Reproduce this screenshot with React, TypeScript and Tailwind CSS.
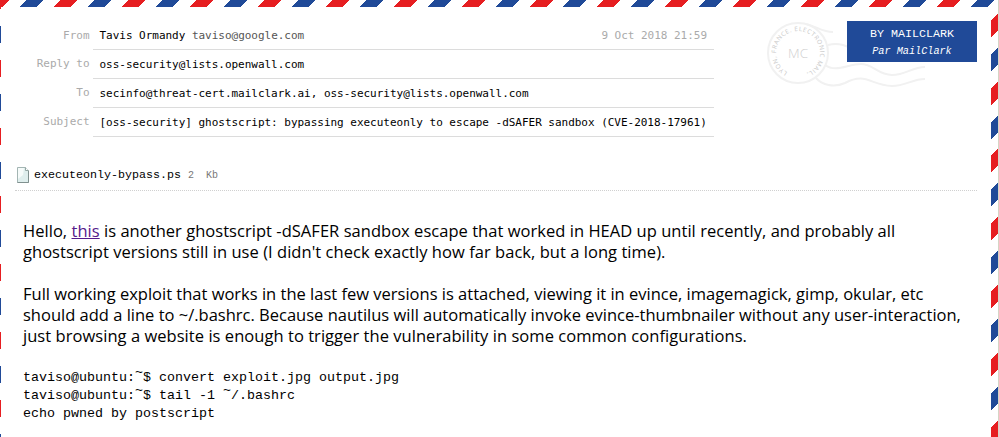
const stripes =
  "bg-[repeating-linear-gradient(135deg,#e61e21_0px,#e61e21_7.05px,#fff_7.05px,#fff_19.05px,#204a98_19.05px,#204a98_31.05px,#fff_31.05px,#fff_43.05px,#e61e21_43.05px,#e61e21_48px)]";

function Field({ label, children, first }: { label: string; children: React.ReactNode; first?: boolean }) {
  return (
    <div className="flex h-[29px]">
      <div className={`w-[92px] pr-[3.5px] text-right leading-[29px] text-[#aaa] ${first ? "" : "-mt-px"}`}>{label}</div>
      <div className="flex w-[621px] justify-between border-b border-[#dcdcdc] pr-[7px] pl-[6.5px] leading-[29px] whitespace-pre text-black">
        {children}
      </div>
    </div>
  );
}

function Stamp() {
  return (
    <svg width="170" height="75" viewBox="764 16 170 75" className="block" fill="none">
      <g stroke="#f1f1f1" strokeWidth="2">
        <path d="M806 24 C818 27 822 32 833 32" />
        <path d="M828 45 C836 43 843 44 850 48" />
        <path d="M825 65 C836 73 848 64 861 64 C873 64 878 75 892 75 C906 75 912 67 925 67" />
        <path d="M816 78 C822 85 834 88 845 83 C866 72 870 85 892 86 C906 86 912 79 925 79" />
        <circle cx="798" cy="53" r="30" />
      </g>
      <defs>
        <path id="ring" d="M798 75 A22 22 0 1 1 798.1 75" />
      </defs>
      <text fontFamily="Open Sans, sans-serif" fontSize="6.2" fill="#c8c8c8">
        <textPath href="#ring" startOffset="11" textLength="118">LYON, FRANCE. ELECTRONIC MAIL,</textPath>
      </text>
      <text x="798" y="58" textAnchor="middle" fontFamily="Open Sans, sans-serif" fontSize="13.5" fontWeight="300" fill="#d0d0d0">MC</text>
    </svg>
  );
}

function FileIcon() {
  return (
    <svg width="14" height="18" viewBox="0 0 14 18" className="-mt-[2px]">
      <path d="M1.5 1.5h8l3 3v12h-11z" fill="#dfeeed" stroke="#a3b5b3" />
      <path d="M12.5 5v11.5h-11" fill="none" stroke="#80918f" />
      <path d="M9.5 1.5v3h3" fill="#fff" stroke="#93a5a3" />
      <path d="M2 2h6l-1 7-5 4z" fill="#f6fbfa" />
    </svg>
  );
}

const Tilde = () => <span className="relative -top-[5px]">~</span>;

export default function App() {
  return (
    <div className="h-[437px] w-[999px] overflow-hidden border-r border-[#d5d5c5] bg-white">
      <div className={`h-[437px] pt-[7px] pr-[7px] pl-px ${stripes}`}>
        <div className="h-[430px] bg-white">
          <header className="flex h-[154px] pt-[14px] font-['DejaVu_Sans_Mono',monospace] text-[11px] tracking-[-0.022px]">
            <div className="w-[713px]">
              <Field label="From" first>
                <span>Tavis Ormandy <span className="text-[#555]">taviso@google.com</span></span>
                <span className="text-[#aaa]">9 Oct 2018 21:59</span>
              </Field>
              <Field label="Reply to">oss-security@lists.openwall.com</Field>
              <Field label="To">secinfo@threat-cert.mailclark.ai, oss-security@lists.openwall.com</Field>
              <Field label="Subject">[oss-security] ghostscript: bypassing executeonly to escape -dSAFER sandbox (CVE-2018-17961)</Field>
            </div>
            <div className="relative ml-[50px] -mt-[5px] h-[75px] w-[170px]">
              <Stamp />
              <div className="absolute top-[5px] left-[83px] h-[41px] w-[130px] bg-[#204a98] pt-[4px] text-center font-['Liberation_Mono',monospace] text-[11.67px] leading-[18px] tracking-normal text-white">
                <div>BY MAILCLARK</div>
                <div className="text-[10.2px] leading-[17px] italic">Par MailClark</div>
              </div>
            </div>
          </header>
          <div className="ml-[14px] flex h-[30px] w-[962px] items-center border-b border-dotted border-[#d0d0d0] pl-px font-['Liberation_Mono',monospace]">
            <FileIcon />
            <span className="ml-[4px] text-[11.67px] text-black">executeonly-bypass.ps</span>
            <span className="ml-[7px] text-[10px] whitespace-pre text-[#777]">2  Kb</span>
          </div>
          <main className="pt-[29px] pl-[22px] text-black">
            <div className="font-['Open_Sans',sans-serif] text-[16.5px] leading-[21px] whitespace-nowrap">
              <p className="tracking-[0.035px]">Hello, <a className="text-[#551a8b] underline">this</a> is another ghostscript -dSAFER sandbox escape that worked in HEAD up until recently, and probably all</p>
              <p className="tracking-[0.04px]">ghostscript versions still in use (I didn't check exactly how far back, but a long time).</p>
              <p className="mt-[21px]">Full working exploit that works in the last few versions is attached, viewing it in evince, imagemagick, gimp, okular, etc</p>
              <p>should add a line to ~/.bashrc. Because nautilus will automatically invoke evince-thumbnailer without any user-interaction,</p>
              <p className="tracking-[0.045px]">just browsing a website is enough to trigger the vulnerability in some common configurations.</p>
            </div>
            <pre className="mt-[23px] font-['Liberation_Mono',monospace] text-[13.333px] leading-[18px]">
              taviso@ubuntu:<Tilde />$ convert exploit.jpg output.jpg{"\n"}
              taviso@ubuntu:<Tilde />$ tail -1 <Tilde />/.bashrc{"\n"}
              echo pwned by postscript
            </pre>
          </main>
        </div>
      </div>
    </div>
  );
}
